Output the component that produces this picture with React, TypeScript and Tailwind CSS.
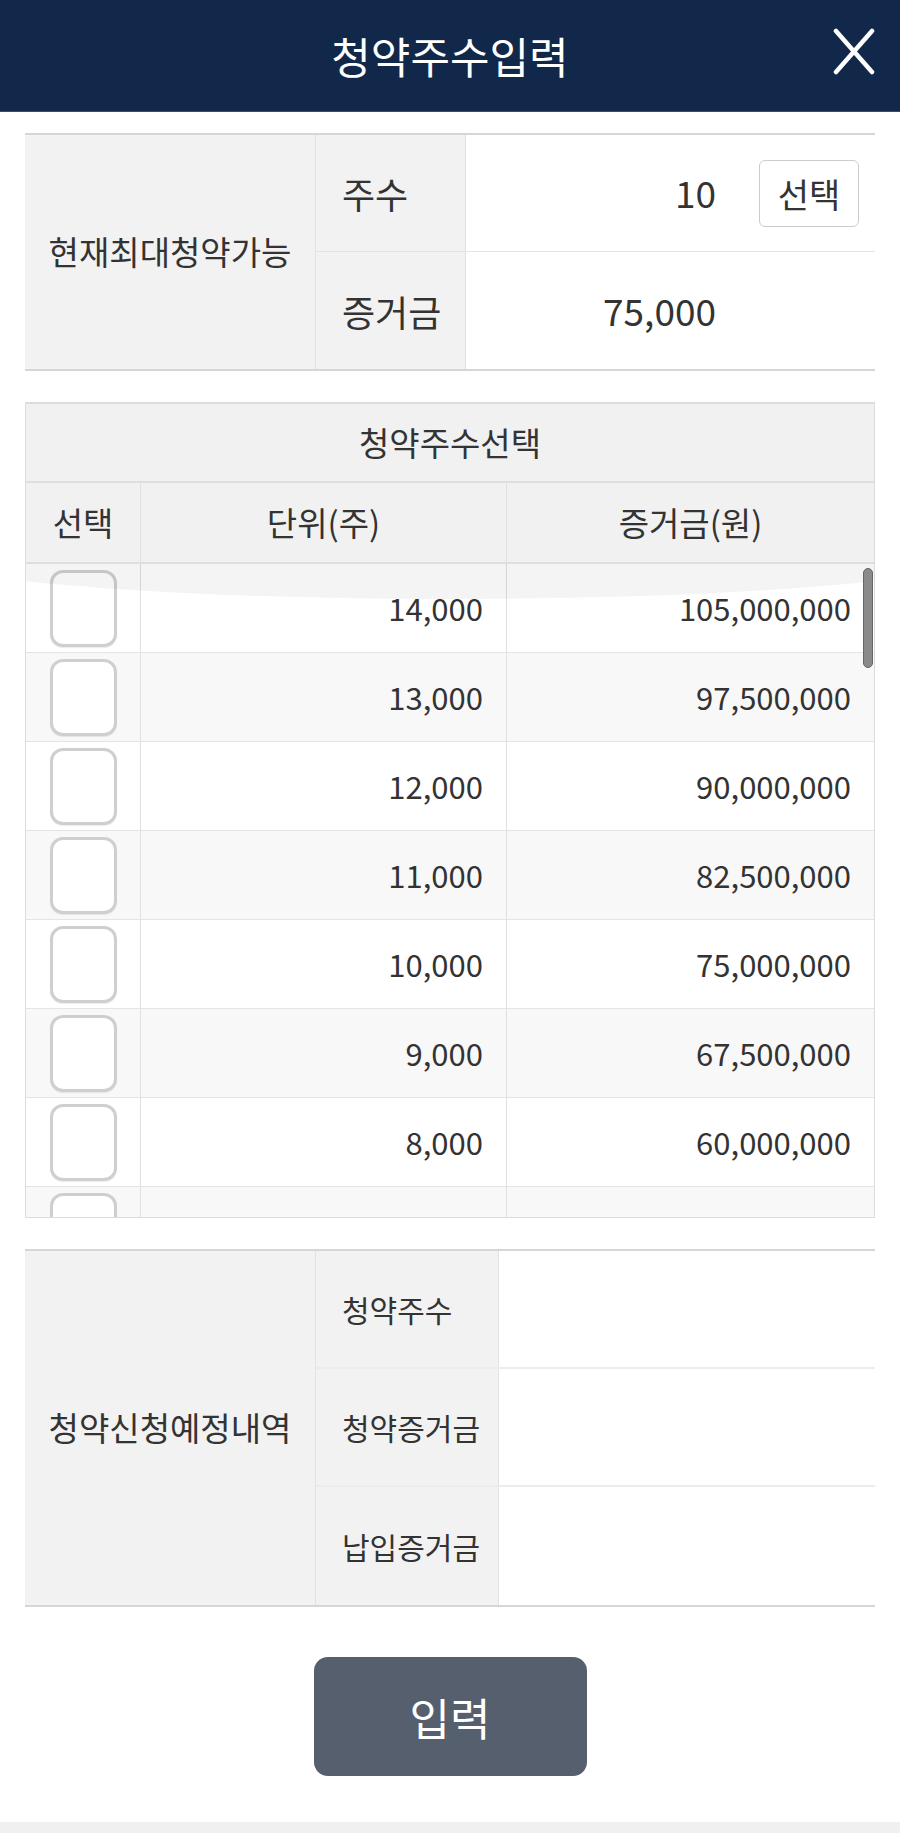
const FONT = "font-['Noto_Sans_CJK_KR','Noto_Sans',sans-serif]";

const rows = [
  { unit: "14,000", amount: "105,000,000" },
  { unit: "13,000", amount: "97,500,000" },
  { unit: "12,000", amount: "90,000,000" },
  { unit: "11,000", amount: "82,500,000" },
  { unit: "10,000", amount: "75,000,000" },
  { unit: "9,000", amount: "67,500,000" },
  { unit: "8,000", amount: "60,000,000" },
  { unit: "", amount: "" }, // partly scrolled out, text not visible
];

function CheckBox() {
  return (
    <div className="h-[77px] w-[67px] rounded-[13px] border-[3px] border-[#cfcfcf] bg-white shadow-[0_1px_1px_rgba(0,0,0,0.08)]" />
  );
}

export default function App() {
  return (
    <div className={`${FONT} flex min-h-[1833px] w-[900px] flex-col bg-white text-[#333]`}>
      {/* header */}
      <div className="relative flex h-[112px] items-center justify-center border-b border-[#3b4c66] bg-[#11284a]">
        <span className="text-[43px] leading-none text-white">청약주수입력</span>
        <svg
          className="absolute right-[25px] top-[28px] h-[47px] w-[42px]"
          viewBox="0 0 42 47"
          fill="none"
          stroke="white"
          strokeWidth={4.5}
          strokeLinecap="round"
        >
          <path d="M3 3 L39 44 M39 3 L3 44" />
        </svg>
      </div>

      {/* 현재최대청약가능 */}
      <div className="mx-[25px] mt-[21px] flex border-y-2 border-[#d6d6d6]">
        <div className="flex w-[291px] items-center justify-center border-r border-[#e2e2e2] bg-[#f2f2f2] text-[33px]">
          현재최대청약가능
        </div>
        <div className="flex flex-1 flex-col">
          <div className="flex h-[117px] border-b border-[#e4e4e4]">
            <div className="flex w-[150px] items-center border-r border-[#e2e2e2] bg-[#f2f2f2] pl-[26px] text-[36px]">
              주수
            </div>
            <div className="flex flex-1 items-center justify-end pr-[16px]">
              <span className="mr-[43px] text-[37px]">10</span>
              <button className="flex h-[67px] w-[100px] items-center justify-center rounded-[6px] border border-[#cccccc] bg-white text-[34px] text-[#333]">
                선택
              </button>
            </div>
          </div>
          <div className="flex h-[117px]">
            <div className="flex w-[150px] items-center border-r border-[#e2e2e2] bg-[#f2f2f2] pl-[26px] text-[36px]">
              증거금
            </div>
            <div className="flex flex-1 items-center justify-end pr-[159px] text-[37px]">75,000</div>
          </div>
        </div>
      </div>

      {/* 청약주수선택 */}
      <div className="mx-[25px] mt-[31px] border border-t-2 border-[#dcdcdc]">
        <div className="flex h-[79px] items-center justify-center border-b-2 border-[#dedede] bg-[#f1f1f1] text-[33px]">
          청약주수선택
        </div>
        <div className="flex h-[81px] border-b-2 border-[#dedede] bg-[#f1f1f1] text-[33px]">
          <div className="flex w-[115px] items-center justify-center border-r border-[#e0e0e0]">선택</div>
          <div className="flex w-[366px] items-center justify-center border-r border-[#e0e0e0]">단위(주)</div>
          <div className="flex flex-1 items-center justify-center">증거금(원)</div>
        </div>
        <div className="relative h-[653px] overflow-hidden">
          {rows.map((r, i) => (
            <div
              key={i}
              className={`flex h-[89px] border-b border-[#e4e4e4] text-[31px] ${
                i % 2 === 1 ? "bg-[#f8f8f8]" : "bg-white"
              }`}
            >
              <div className="flex w-[115px] items-center justify-center border-r border-[#e0e0e0]">
                <CheckBox />
              </div>
              <div className="flex w-[366px] items-center justify-end border-r border-[#e0e0e0] pr-[23px]">
                {r.unit}
              </div>
              <div className="flex flex-1 items-center justify-end pr-[23px]">{r.amount}</div>
            </div>
          ))}
          {/* overscroll glow */}
          <div className="pointer-events-none absolute left-[-120px] right-[-120px] top-[-60px] h-[95px] rounded-[50%] bg-[#000000]/[0.045]" />
          {/* scrollbar */}
          <div className="absolute right-[1px] top-[4px] h-[100px] w-[10px] rounded-full border border-[#666] bg-[#8a8a8a]" />
        </div>
      </div>

      {/* 청약신청예정내역 */}
      <div className="mx-[25px] mt-[31px] flex border-y-2 border-[#d6d6d6]">
        <div className="flex w-[291px] items-center justify-center border-r border-[#e2e2e2] bg-[#f2f2f2] text-[33px]">
          청약신청예정내역
        </div>
        <div className="flex flex-1 flex-col">
          {["청약주수", "청약증거금", "납입증거금"].map((label, i) => (
            <div key={label} className={`flex h-[118px] ${i < 2 ? "border-b-2 border-[#ececec]" : ""}`}>
              <div className="flex w-[183px] items-center border-r border-[#e2e2e2] bg-[#f2f2f2] pl-[26px] text-[30px]">
                {label}
              </div>
              <div className="flex-1 bg-white" />
            </div>
          ))}
        </div>
      </div>

      {/* submit */}
      <div className="flex justify-center pt-[50px]">
        <button className="flex h-[119px] w-[273px] items-center justify-center rounded-[14px] bg-[#555f6d] text-[44px] text-white">
          입력
        </button>
      </div>

      <div className="flex-1" />
      <div className="h-[11px] bg-[#f0f0f0]" />
    </div>
  );
}
